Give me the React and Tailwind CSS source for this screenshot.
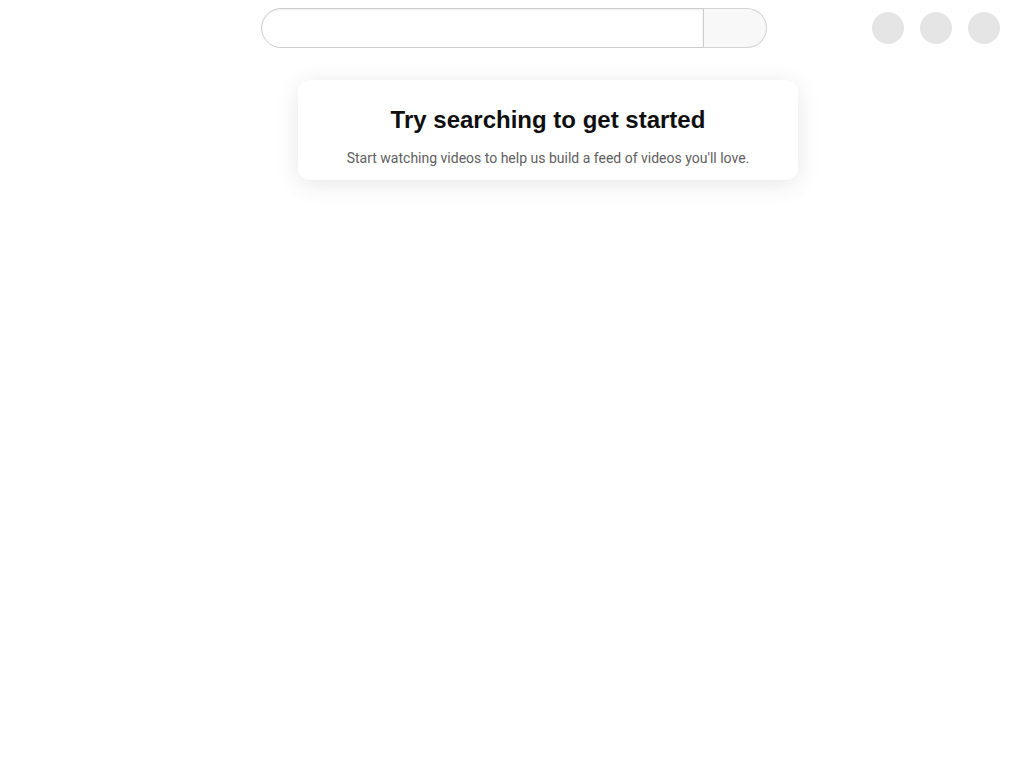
export default function App() {
  return (
    <div className="min-h-screen bg-white" style={{ fontFamily: "Roboto, 'Liberation Sans', sans-serif" }}>
      <header className="flex h-14 items-center">
        <div className="w-[261px] shrink-0" />
        <div className="flex h-10 w-[506px] shrink-0">
          <div className="h-10 w-[443px] shrink-0 rounded-l-full border border-[#cccccc] bg-white shadow-[inset_0_1px_2px_#eeeeee]" />
          <div className="h-10 w-[63px] shrink-0 rounded-r-full border border-l-0 border-[#d3d3d3] bg-[#f8f8f8]" />
        </div>
        <div className="flex flex-1 items-center justify-end gap-4 pr-6">
          <div className="h-8 w-8 rounded-full bg-[#e5e5e5]" />
          <div className="h-8 w-8 rounded-full bg-[#e5e5e5]" />
          <div className="h-8 w-8 rounded-full bg-[#e5e5e5]" />
        </div>
      </header>
      <main className="flex">
        <div className="w-[72px] shrink-0" />
        <div className="flex flex-1 justify-center pt-6">
          <div className="w-[500px] rounded-xl bg-white px-6 pt-6 pb-3 text-center shadow-[0_4px_24px_rgba(0,0,0,0.10)]">
            <h2 className="text-2xl leading-8 font-bold text-[#0f0f0f]" style={{ fontFamily: "'Liberation Sans', Arial, sans-serif" }}>
              Try searching to get started
            </h2>
            <p className="mt-3 text-sm leading-5 text-[#606060]">
              Start watching videos to help us build a feed of videos you'll love.
            </p>
          </div>
        </div>
      </main>
    </div>
  );
}
